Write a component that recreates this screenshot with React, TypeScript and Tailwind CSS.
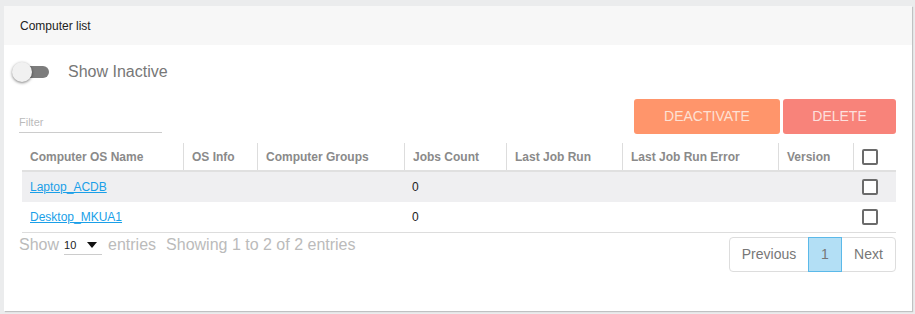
import { useState } from "react";

const columns = [
  { label: "Computer OS Name", w: "w-[161px]" },
  { label: "OS Info", w: "w-[74px]" },
  { label: "Computer Groups", w: "w-[147px]" },
  { label: "Jobs Count", w: "w-[102px]" },
  { label: "Last Job Run", w: "w-[116px]" },
  { label: "Last Job Run Error", w: "w-[156px]" },
  { label: "Version", w: "w-[75px]" },
];

const computers = [
  { name: "Laptop_ACDB", jobs: 0 },
  { name: "Desktop_MKUA1", jobs: 0 },
];

function Box() {
  return <div className="w-[16px] h-[16px] rounded-[2px] border-2 border-[#6b6b6b] bg-white" />;
}

export default function App() {
  const [inactive, setInactive] = useState(false);

  return (
    <div className="min-h-[314px] bg-[#ebeced] pt-[6px] pl-[4px] pr-[3px] font-['Liberation_Sans',Arial,sans-serif]">
      <div className="h-[305px] bg-white shadow-[1px_1px_1px_rgba(0,0,0,0.18)]">
        {/* Header */}
        <div className="h-[39px] bg-[#f7f7f7] flex items-center pl-[16px] text-[12px] text-[#222]">
          Computer list
        </div>

        <div className="pl-[8px] pr-[15px]">
          {/* Show inactive toggle */}
          <div className="flex items-center h-[54px] pt-[1px] pb-[1px]">
            <button
              onClick={() => setInactive(!inactive)}
              className="relative w-[40px] h-[22px] flex items-center"
            >
              <span className="absolute left-[1px] w-[36px] h-[12px] rounded-full bg-[#7c7c7c]" />
              <span className="absolute left-0 w-[20px] h-[20px] rounded-full bg-[#f1f1f1] shadow-[0_1px_3px_rgba(0,0,0,0.5)]" />
            </button>
            <span className="ml-[16px] text-[16px] text-[#777]">Show Inactive</span>
          </div>

          {/* Filter + actions */}
          <div className="flex items-start justify-between pl-[7px] pr-[1px]">
            <div className="w-[143px] mt-[15px] border-b border-[#ccc] pb-[1px] text-[11px] text-[#bbb]">
              Filter
            </div>
            <div className="flex gap-[3px]">
              <button className="w-[146px] h-[35px] rounded-[3px] bg-[#ff956b] text-[14px] text-[#fde1d4]">
                DEACTIVATE
              </button>
              <button className="w-[113px] h-[35px] rounded-[3px] bg-[#f8837a] text-[14px] text-[#fde0de]">
                DELETE
              </button>
            </div>
          </div>

          {/* Table */}
          <div className="ml-[10px] mt-[9px] w-[874px] text-[12px]">
            <div className="flex h-[29px] border-b-2 border-[#e0e0e0]">
              {columns.map((c, i) => (
                <div
                  key={c.label}
                  className={`${c.w} flex items-center pl-[8px] font-bold text-[#8a8a8a] ${i > 0 ? "border-l border-[#ddd]" : ""}`}
                >
                  {c.label}
                </div>
              ))}
              <div className="w-[43px] flex items-center pl-[8px] border-l border-[#ddd]">
                <Box />
              </div>
            </div>
            {computers.map((c, i) => (
              <div
                key={c.name}
                className={`flex h-[30px] items-center ${i % 2 === 0 ? "bg-[#efeff1]" : "bg-white"}`}
              >
                <div className="w-[161px] pl-[8px]">
                  <a href="#" className="text-[#1a9fe8] underline">{c.name}</a>
                </div>
                <div className="w-[74px]" />
                <div className="w-[147px]" />
                <div className="w-[102px] pl-[8px] text-[#222]">{c.jobs}</div>
                <div className="w-[116px]" />
                <div className="w-[156px]" />
                <div className="w-[75px]" />
                <div className="w-[43px] pl-[9px]">
                  <Box />
                </div>
              </div>
            ))}
            <div className="border-t border-[#ddd]" />
          </div>

          {/* Footer */}
          <div className="flex items-start justify-between mt-[4px] pl-[7px] pr-[1px]">
            <div className="flex items-start text-[16px] leading-[18px] text-[#bbb] -mt-[1px]">
              <span>Show</span>
              <div className="ml-[5px] w-[38px] flex items-center justify-between border-b border-[#ccc] h-[19px]">
                <span className="text-[11px] text-[#222]">10</span>
                <svg width="10" height="6" viewBox="0 0 10 6" className="mr-[5px]">
                  <path d="M0 0h10L5 6z" fill="#111" />
                </svg>
              </div>
              <span className="ml-[6px]">entries</span>
              <span className="ml-[10px]">Showing 1 to 2 of 2 entries</span>
            </div>
            <div className="flex h-[35px] text-[14px] text-[#777] rounded-[4px] border border-[#ddd]">
              <span className="w-[78px] flex items-center justify-center">Previous</span>
              <span className="w-[34px] flex items-center justify-center bg-[#b3dff5] border border-[#5bb9e9] -my-px">1</span>
              <span className="w-[53px] flex items-center justify-center">Next</span>
            </div>
          </div>
        </div>
      </div>
    </div>
  );
}
